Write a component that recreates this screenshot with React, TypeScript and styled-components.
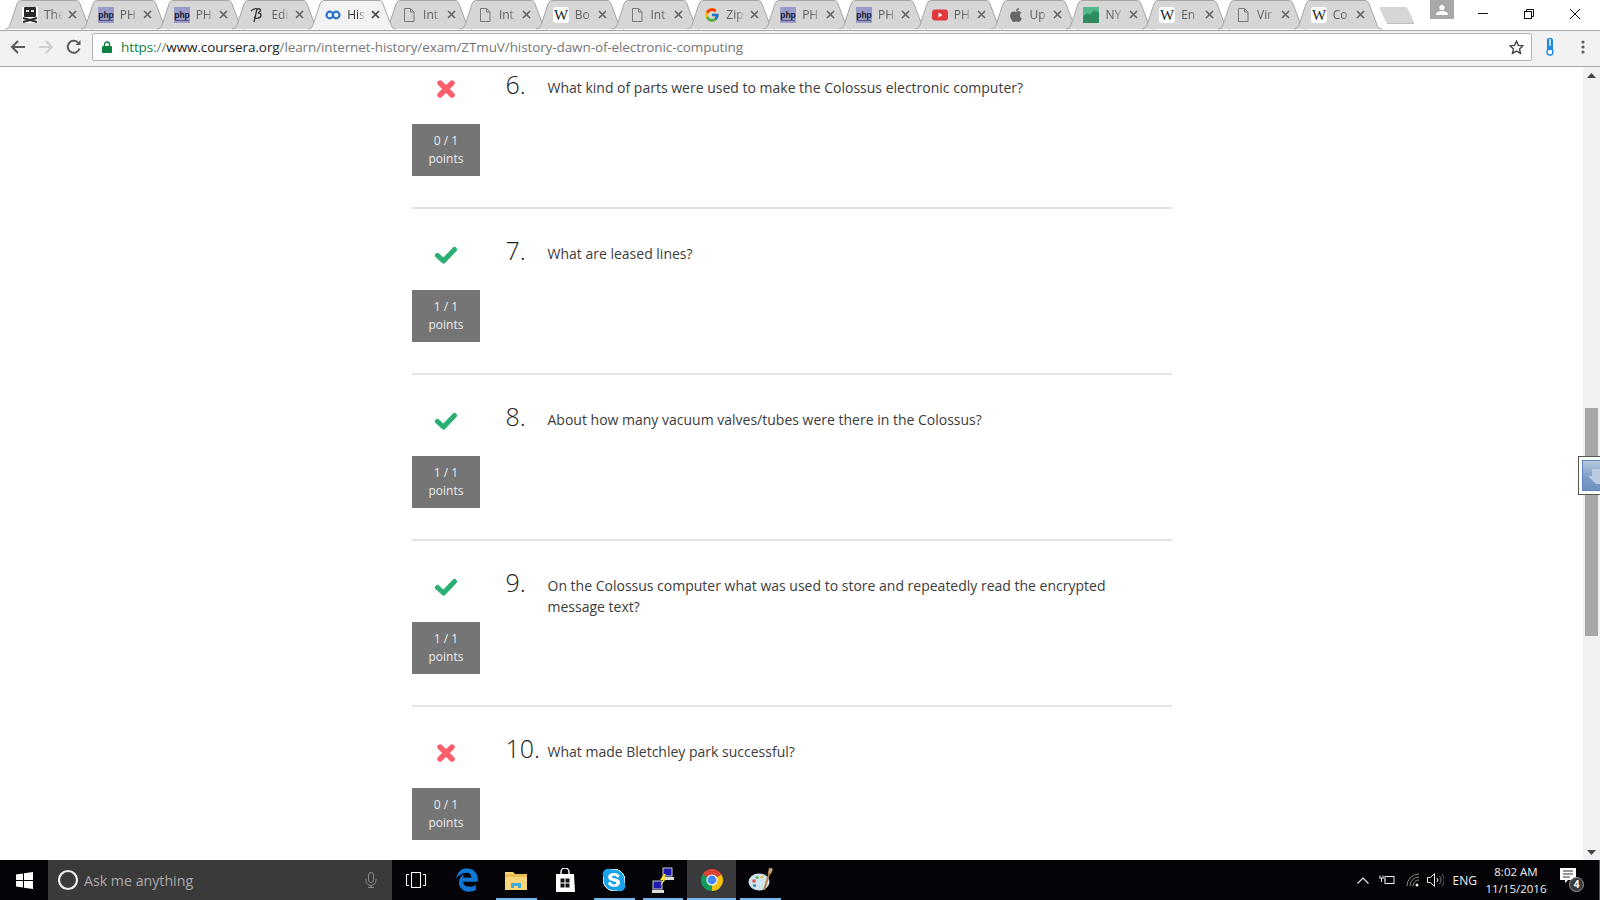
import { ReactNode } from 'react';
import styled, { createGlobalStyle } from 'styled-components';
import { FaApple, FaEdgeLegacy, FaSkype } from 'react-icons/fa';
import { FcGoogle } from 'react-icons/fc';

// #region StyledComponents

const GlobalStyle = createGlobalStyle`
  html, body {
    margin: 0;
    padding: 0;
    overflow: hidden;
    background: #fff;
    font-family: "Open Sans", "Noto Sans", sans-serif;
  }
`;

const Screen = styled.div`
  display: flex;
  flex-direction: column;
  width: 1600px;
  height: 900px;
  overflow: hidden;
`;

const TabStrip = styled.div`
  display: flex;
  flex: 0 0 29px;
  padding-left: 5px;
  background: #fff;
  border-bottom: 1px solid #a6a6a6;
`;

const Tab = styled.div<{ $active?: boolean }>`
  position: relative;
  z-index: ${(p) => (p.$active ? 2 : 1)};
  display: flex;
  align-items: center;
  flex: 0 0 88px;
  height: ${(p) => (p.$active ? 30 : 29)}px;
  margin-right: -12.2px;
  padding-left: 17px;
  padding-bottom: ${(p) => (p.$active ? 1 : 0)}px;
  box-sizing: border-box;
`;

const TabShape = styled.svg`
  position: absolute;
  top: 0;
  left: 0;
`;

const Favicon = styled.span`
  position: relative;
  display: flex;
  align-items: center;
  justify-content: center;
  width: 16px;
  height: 16px;
  flex: none;
`;

const TabTitle = styled.span<{ $active?: boolean }>`
  position: relative;
  width: 19px;
  margin-left: 6px;
  overflow: hidden;
  white-space: nowrap;
  font-size: 12px;
  line-height: 16px;
  color: ${(p) => (p.$active ? '#333' : '#5f5f5f')};
  -webkit-mask-image: linear-gradient(90deg, #000 55%, transparent 100%);
  mask-image: linear-gradient(90deg, #000 55%, transparent 100%);
`;

const TabClose = styled.svg`
  position: relative;
  margin-left: 4.5px;
  flex: none;
`;

const NewTab = styled.div`
  flex: 0 0 28px;
  height: 16px;
  margin: 7px 0 0 13px;
  background: #d6d6d6;
  border-bottom: 1px solid #bdbdbd;
  border-radius: 2px;
  transform: skewX(25deg);
`;

const WindowArea = styled.div`
  display: flex;
  align-items: flex-start;
  margin-left: auto;
  padding-right: 2px;
`;

const ProfileButton = styled.div`
  display: flex;
  align-items: center;
  justify-content: center;
  width: 24px;
  height: 19px;
  margin-right: 6px;
  background: #a8a8a8;
`;

const WindowButton = styled.div`
  display: flex;
  align-items: center;
  justify-content: center;
  width: 46px;
  height: 27px;
`;

const Toolbar = styled.div`
  display: flex;
  align-items: center;
  flex: 0 0 36px;
  box-sizing: border-box;
  padding-bottom: 3px;
  background: #f2f2f2;
  border-bottom: 1px solid #a6a6a6;
`;

const NavButton = styled.div`
  display: flex;
  align-items: center;
  justify-content: center;
  flex: 0 0 28px;
  height: 28px;
  &:first-child {
    margin-left: 4px;
  }
`;

const AddressBar = styled.div`
  display: flex;
  align-items: center;
  width: 1440px;
  height: 28px;
  margin-left: 4px;
  box-sizing: border-box;
  padding: 0 7px 0 9px;
  background: #fff;
  border: 1px solid #b4b4b4;
  border-radius: 2px;
`;

const Url = styled.span`
  margin-left: 9px;
  font-size: 13.5px;
  letter-spacing: -0.1px;
  color: #777;
  white-space: nowrap;
`;

const UrlScheme = styled.span`
  color: #0b8043;
`;

const UrlHost = styled.span`
  color: #222;
`;

const Star = styled.svg`
  margin-left: auto;
`;

const ExtensionButton = styled.div`
  display: flex;
  align-items: center;
  justify-content: center;
  flex: 0 0 31px;
  height: 28px;
  margin-left: 2px;
`;

const Main = styled.div`
  position: relative;
  display: flex;
  flex: 1;
  min-height: 0;
`;

const Page = styled.div`
  flex: 1;
  overflow: hidden;
  background: #fff;
`;

const QuestionList = styled.div`
  width: 760px;
  margin: -24px 0 0 412px;
`;

const Row = styled.div`
  display: flex;
  height: 132px;
  padding-top: 32px;
  border-bottom: 2px solid #e2e2e2;
`;

const ScoreColumn = styled.div`
  display: flex;
  flex-direction: column;
  align-items: center;
  flex: 0 0 68px;
`;

const MarkIcon = styled.div`
  display: flex;
  align-items: center;
  justify-content: center;
  height: 28px;
  margin-bottom: 21px;
`;

const ScoreBox = styled.div`
  width: 68px;
  height: 52px;
  padding-top: 8px;
  box-sizing: border-box;
  background: #757575;
  color: #ebebeb;
  font-size: 12px;
  line-height: 18px;
  text-align: center;
`;

const QuestionNumber = styled.div`
  flex: 0 0 42px;
  margin-left: 25.5px;
  font-size: 25px;
  font-weight: 300;
  line-height: 18px;
  color: #222;
`;

const QuestionText = styled.div`
  width: 590px;
  padding-top: 2px;
  font-size: 14px;
  line-height: 21px;
  color: #3c3c3c;
`;

const ScrollTrack = styled.div`
  display: flex;
  flex-direction: column;
  align-items: center;
  flex: 0 0 17px;
  background: #f1f1f1;
`;

const ScrollArrow = styled.svg`
  flex: none;
  margin-top: 6px;
`;

const ScrollThumb = styled.div`
  width: 13px;
  height: 228px;
  margin-top: 330px;
  background: #a8a8a8;
`;

const ScrollArrowEnd = styled(ScrollArrow)`
  margin-top: auto;
  margin-bottom: 5px;
`;

const FloatingWidget = styled.div`
  position: absolute;
  top: 389px;
  right: 0;
  width: 22px;
  height: 39px;
  box-sizing: border-box;
  padding: 3px 0 3px 3px;
  background: #fff;
  border: 1px solid #555;
  border-right: none;
`;

const WidgetIcon = styled.div`
  display: flex;
  align-items: flex-end;
  justify-content: flex-end;
  height: 100%;
  padding-bottom: 6px;
  box-sizing: border-box;
  background: linear-gradient(180deg, #b9c9de 0%, #7a9cc6 55%, #6f92bd 100%);
  border: 1px solid #5f86c0;
  border-right: none;
`;

const Taskbar = styled.div`
  display: flex;
  align-items: center;
  flex: 0 0 40px;
  background: #040408;
`;

const StartButton = styled.div`
  display: flex;
  align-items: center;
  justify-content: center;
  flex: 0 0 48px;
  height: 40px;
`;

const SearchBox = styled.div`
  display: flex;
  align-items: center;
  flex: 0 0 344px;
  height: 40px;
  box-sizing: border-box;
  padding: 0 15px 0 9px;
  background: #3a3a3a;
`;

const SearchHint = styled.span`
  margin-left: 5px;
  font-size: 14.2px;
  color: #a9a9a9;
`;

const MicIcon = styled.svg`
  margin-left: auto;
`;

const TaskViewButton = styled.div`
  display: flex;
  align-items: center;
  justify-content: center;
  flex: 0 0 48px;
  margin-right: 3px;
  height: 40px;
`;

const TaskButton = styled.div<{ $open?: boolean; $active?: boolean }>`
  position: relative;
  display: flex;
  align-items: center;
  justify-content: center;
  flex: 0 0 48.9px;
  height: 40px;
  background: ${(p) => (p.$active ? '#3a3a3c' : 'transparent')};
  &::after {
    content: '';
    display: ${(p) => (p.$open ? 'block' : 'none')};
    position: absolute;
    left: ${(p) => (p.$active ? 0 : 4)}px;
    right: ${(p) => (p.$active ? 0 : 4)}px;
    bottom: 0;
    height: 2px;
    background: #76b9ed;
  }
`;

const SkypeBadge = styled.span`
  display: flex;
  align-items: center;
  justify-content: center;
  width: 26px;
  height: 26px;
  border-radius: 50%;
  background: radial-gradient(circle, #fff 60%, transparent 62%);
  color: #19a3e8;
`;

const Tray = styled.div`
  display: flex;
  align-items: center;
  height: 40px;
  margin-left: auto;
  padding-right: 4px;
  border-right: 1px solid #555;
  box-sizing: border-box;
`;

const TrayItem = styled.div<{ $gap: number }>`
  display: flex;
  align-items: center;
  margin-left: ${(p) => p.$gap}px;
`;

const TrayLabel = styled.span`
  font-size: 12px;
  color: #f0f0f0;
`;

const Clock = styled.div`
  font-size: 11.5px;
  line-height: 17px;
  color: #f0f0f0;
  text-align: center;
  white-space: nowrap;
`;

const NotificationButton = styled.div`
  position: relative;
  display: flex;
  width: 24px;
  height: 24px;
  margin-right: 11px;
`;

const NotificationCount = styled.span`
  position: absolute;
  right: 0;
  bottom: 0;
  width: 15px;
  height: 15px;
  border-radius: 50%;
  background: #3a3a3a;
  border: 1px solid #999;
  box-sizing: border-box;
  font-size: 10px;
  font-weight: 700;
  line-height: 13px;
  text-align: center;
  color: #fff;
`;

// #endregion

const PhpIcon = () => (
  <svg width="16" height="16" viewBox="0 0 16 16">
    <rect width="16" height="16" fill="#9a9acb" />
    <text x="8" y="11" fontSize="8.5" fontFamily="Liberation Sans, sans-serif" fontWeight="700" textAnchor="middle" fill="#1a1a2a">
      php
    </text>
    <rect x="1" y="13" width="14" height="1" fill="#55557a" />
  </svg>
);

const PageIcon = () => (
  <svg width="16" height="16" viewBox="0 0 16 16" fill="none" stroke="#777" strokeWidth="1">
    <path d="M3.5 1.5h6l3.5 3.5v9.5h-9.5z" />
    <path d="M9.5 1.5v3.5h3.5" />
  </svg>
);

const WikiIcon = () => (
  <svg width="16" height="16" viewBox="0 0 16 16">
    <rect width="16" height="16" rx="3" fill="#fff" />
    <text x="8" y="13" fontSize="15" fontFamily="Liberation Serif, serif" textAnchor="middle" fill="#222">
      W
    </text>
  </svg>
);

const PirateIcon = () => (
  <svg width="16" height="16" viewBox="0 0 16 16">
    <rect width="16" height="16" fill="#fff" />
    <rect x="2" y="0" width="12" height="10" rx="1" fill="#2a2a2a" />
    <rect x="4" y="3" width="3" height="2" fill="#ddd" />
    <rect x="9" y="3" width="3" height="2" fill="#ddd" />
    <path d="M1 11l14 4M15 11L1 15" stroke="#2a2a2a" strokeWidth="2" />
  </svg>
);

const ScriptIcon = () => (
  <svg width="16" height="16" viewBox="0 0 16 16" fill="none" stroke="#333" strokeWidth="1.3">
    <path d="M2 4c2-2 4-3 6-2l-3 13M8 2c4-1 5 2 1 4 4 0 4 4 0 5-2 1-3 0-4-1" />
  </svg>
);

const CourseraIcon = () => (
  <svg width="16" height="16" viewBox="0 0 16 16" fill="none" stroke="#2a73cc" strokeWidth="2.2">
    <circle cx="4.8" cy="8" r="3.3" />
    <circle cx="11.2" cy="8" r="3.3" />
  </svg>
);

const YoutubeIcon = () => (
  <svg width="16" height="16" viewBox="0 0 16 16">
    <rect y="2.5" width="16" height="11" rx="3" fill="#e0393e" />
    <path d="M6.5 5.5l4 2.5-4 2.5z" fill="#fff" />
  </svg>
);

const ChartIcon = () => (
  <svg width="16" height="16" viewBox="0 0 16 16">
    <rect width="16" height="16" fill="#3c9a70" />
    <path d="M0 10l4-3 3 2 4-5 5 3v9H0z" fill="#2f8a5f" />
    <path d="M0 0h16v5l-5-2-4 4-3-1-4 3z" fill="#52b98b" />
  </svg>
);

const CheckMark = () => (
  <svg width="24" height="18" viewBox="0 0 24 18" fill="none" stroke="#2bb074" strokeWidth="5" strokeLinecap="round" strokeLinejoin="round">
    <path d="M3.5 9.5l6 5.5L20.5 3.5" />
  </svg>
);

const CrossMark = () => (
  <svg width="18" height="18" viewBox="0 0 18 18" fill="none" stroke="#fb5f6c" strokeWidth="5.4" strokeLinecap="round">
    <path d="M3 3l12 12M15 3L3 15" />
  </svg>
);

const tabs: { icon: ReactNode; title: string; active?: boolean }[] = [
  { icon: <PirateIcon />, title: 'The' },
  { icon: <PhpIcon />, title: 'PH' },
  { icon: <PhpIcon />, title: 'PH' },
  { icon: <ScriptIcon />, title: 'Edi' },
  { icon: <CourseraIcon />, title: 'His', active: true },
  { icon: <PageIcon />, title: 'Int' },
  { icon: <PageIcon />, title: 'Int' },
  { icon: <WikiIcon />, title: 'Bo' },
  { icon: <PageIcon />, title: 'Int' },
  { icon: <FcGoogle size={16} />, title: 'Zip' },
  { icon: <PhpIcon />, title: 'PH' },
  { icon: <PhpIcon />, title: 'PH' },
  { icon: <YoutubeIcon />, title: 'PH' },
  { icon: <FaApple size={16} color="#666" />, title: 'Up' },
  { icon: <ChartIcon />, title: 'NY' },
  { icon: <WikiIcon />, title: 'En' },
  { icon: <PageIcon />, title: 'Vir' },
  { icon: <WikiIcon />, title: 'Co' },
];

const questions = [
  { n: 6, score: 0, text: 'What kind of parts were used to make the Colossus electronic computer?' },
  { n: 7, score: 1, text: 'What are leased lines?' },
  { n: 8, score: 1, text: 'About how many vacuum valves/tubes were there in the Colossus?' },
  { n: 9, score: 1, text: 'On the Colossus computer what was used to store and repeatedly read the encrypted message text?' },
  { n: 10, score: 0, text: 'What made Bletchley park successful?' },
];

const TAB_PATH = 'M0 29C3 29 4 27 5 25L12 4C13 1 14.5 .5 17 .5H70C73 .5 74 1 75 4L83 25C84 27 85 29 88 29';

function BrowserTab({ icon, title, active }: { icon: ReactNode; title: string; active?: boolean }) {
  return (
    <Tab $active={active}>
      <TabShape width="88" height="30" viewBox="0 0 88 30">
        <path d={TAB_PATH} fill={active ? '#f2f2f2' : '#d6d6d6'} stroke="#a6a6a6" strokeWidth="1" />
      </TabShape>
      <Favicon>{icon}</Favicon>
      <TabTitle $active={active}>{title}</TabTitle>
      <TabClose width="9" height="9" viewBox="0 0 9 9" stroke={active ? '#444' : '#666'} strokeWidth="1.7">
        <path d="M1 1l7 7M8 1L1 8" />
      </TabClose>
    </Tab>
  );
}

const ChromeLogo = () => (
  <svg width="24" height="24" viewBox="0 0 24 24">
    <path d="M12 12L2.47 6.5A11 11 0 0 1 21.53 6.5Z" fill="#db4437" />
    <path d="M12 12L21.53 6.5A11 11 0 0 1 12 23Z" fill="#f4c20d" />
    <path d="M12 12L12 23A11 11 0 0 1 2.47 6.5Z" fill="#0f9d58" />
    <circle cx="12" cy="12" r="5.6" fill="#fff" />
    <circle cx="12" cy="12" r="4.4" fill="#4285f4" />
  </svg>
);

const ExplorerIcon = () => (
  <svg width="22" height="20" viewBox="0 0 22 20">
    <path d="M0 2h8l2 2h12v16H0z" fill="#f6d67a" />
    <rect y="4" width="22" height="3" fill="#e9bd54" />
    <path d="M6 18v-5h10v5h-3v-2H9v2z" fill="#3fa8dc" />
  </svg>
);

const StoreIcon = () => (
  <svg width="22" height="24" viewBox="0 0 22 24">
    <path d="M7 6V4a4 4 0 0 1 8 0v2" fill="none" stroke="#fff" strokeWidth="1.4" />
    <path d="M2 6h18l1 18H2z" fill="#fff" />
    <path d="M6.5 10.5h4v4h-4zM11.5 10.5h4v4h-4zM6.5 15.5h4v4h-4zM11.5 15.5h4v4h-4z" fill="#111" />
  </svg>
);

const NetworkIcon = () => (
  <svg width="24" height="26" viewBox="0 0 24 26">
    <rect x="12" y="1" width="9" height="8" fill="#1a1ab0" stroke="#ccc" />
    <rect x="11" y="10" width="12" height="3" fill="#ddd" />
    <rect x="2" y="14" width="9" height="8" fill="#1a1ab0" stroke="#ccc" />
    <rect x="1" y="23" width="12" height="3" fill="#ddd" />
    <path d="M13 7l-4 6h3l-3 6 7-8h-3l2-4z" fill="#ffe733" />
  </svg>
);

const PaintIcon = () => (
  <svg width="26" height="26" viewBox="0 0 26 26">
    <ellipse cx="11" cy="15" rx="10.5" ry="8.5" fill="#cfe3ee" />
    <circle cx="6" cy="14" r="1.8" fill="#d9534f" />
    <circle cx="9" cy="10.5" r="1.6" fill="#5cb85c" />
    <circle cx="14" cy="10" r="1.6" fill="#e8c33a" />
    <circle cx="6.5" cy="18.5" r="1.6" fill="#4a7fc1" />
    <path d="M23 1l-7 22" stroke="#b5814a" strokeWidth="2" />
    <path d="M21 1l4 1-2 5-3-1z" fill="#c9a26a" />
  </svg>
);

export default function App() {
  return (
    <Screen>
      <GlobalStyle />
      <TabStrip>
        {tabs.map((t, i) => (
          <BrowserTab key={i} icon={t.icon} title={t.title} active={t.active} />
        ))}
        <NewTab />
        <WindowArea>
          <ProfileButton>
            <svg width="12" height="12" viewBox="0 0 12 12" fill="#fff">
              <circle cx="6" cy="3.5" r="2.6" />
              <path d="M0 11c0-3 3-4 6-4s6 1 6 4z" />
            </svg>
          </ProfileButton>
          <WindowButton>
            <svg width="10" height="1" viewBox="0 0 10 1">
              <rect width="10" height="1" fill="#111" />
            </svg>
          </WindowButton>
          <WindowButton>
            <svg width="10" height="10" viewBox="0 0 10 10" fill="none" stroke="#111">
              <rect x=".5" y="2.5" width="7" height="7" />
              <path d="M2.5 2.5v-2h7v7h-2" />
            </svg>
          </WindowButton>
          <WindowButton>
            <svg width="10" height="10" viewBox="0 0 10 10" stroke="#111">
              <path d="M0 0l10 10M10 0L0 10" />
            </svg>
          </WindowButton>
        </WindowArea>
      </TabStrip>

      <Toolbar>
        <NavButton>
          <svg width="16" height="16" viewBox="0 0 16 16" fill="none" stroke="#5a5a5a" strokeWidth="2">
            <path d="M15 8H2M8 2L2 8l6 6" />
          </svg>
        </NavButton>
        <NavButton>
          <svg width="16" height="16" viewBox="0 0 16 16" fill="none" stroke="#cfcfcf" strokeWidth="2">
            <path d="M1 8h13M8 2l6 6-6 6" />
          </svg>
        </NavButton>
        <NavButton>
          <svg width="16" height="16" viewBox="0 0 16 16" fill="none" stroke="#5a5a5a" strokeWidth="2">
            <path d="M13.5 9.5A6 6 0 1 1 12 3.6" />
            <path d="M14.5 1v5h-5z" fill="#5a5a5a" stroke="none" />
          </svg>
        </NavButton>
        <AddressBar>
          <svg width="10" height="12" viewBox="0 0 10 12">
            <path d="M2.5 5V3.5a2.5 2.5 0 0 1 5 0V5" fill="none" stroke="#0b8043" strokeWidth="1.4" />
            <rect y="5" width="10" height="7" rx="1" fill="#0b8043" />
          </svg>
          <Url>
            <UrlScheme>https</UrlScheme>://<UrlHost>www.coursera.org</UrlHost>/learn/internet-history/exam/ZTmuV/history-dawn-of-electronic-computing
          </Url>
          <Star width="15" height="15" viewBox="0 0 15 15" fill="none" stroke="#444" strokeWidth="1.4">
            <path d="M7.5 1.2l1.9 4.2 4.5.5-3.4 3 1 4.5-4-2.3-4 2.3 1-4.5-3.4-3 4.5-.5z" />
          </Star>
        </AddressBar>
        <ExtensionButton>
          <svg width="8" height="18" viewBox="0 0 8 18">
            <rect x="1" width="6" height="13" rx="2" fill="#1e88e5" />
            <rect x="3" y="1" width="2" height="7" fill="#bcdcf7" />
            <circle cx="4" cy="14" r="3" fill="#fff" stroke="#1e88e5" strokeWidth="1.4" />
          </svg>
        </ExtensionButton>
        <ExtensionButton>
          <svg width="4" height="14" viewBox="0 0 4 14" fill="#5a5a5a">
            <circle cx="2" cy="2" r="1.6" />
            <circle cx="2" cy="7" r="1.6" />
            <circle cx="2" cy="12" r="1.6" />
          </svg>
        </ExtensionButton>
      </Toolbar>

      <Main>
        <Page>
          <QuestionList>
            {questions.map((q) => (
              <Row key={q.n}>
                <ScoreColumn>
                  <MarkIcon>{q.score > 0 ? <CheckMark /> : <CrossMark />}</MarkIcon>
                  <ScoreBox>
                    {q.score} / 1
                    <br />
                    points
                  </ScoreBox>
                </ScoreColumn>
                <QuestionNumber>{q.n}.</QuestionNumber>
                <QuestionText>{q.text}</QuestionText>
              </Row>
            ))}
          </QuestionList>
        </Page>
        <ScrollTrack>
          <ScrollArrow width="9" height="5" viewBox="0 0 9 5">
            <path d="M4.5 0L9 5H0z" fill="#444" />
          </ScrollArrow>
          <ScrollThumb />
          <ScrollArrowEnd width="9" height="5" viewBox="0 0 9 5">
            <path d="M0 0h9L4.5 5z" fill="#444" />
          </ScrollArrowEnd>
        </ScrollTrack>
        <FloatingWidget>
          <WidgetIcon>
            <svg width="12" height="15" viewBox="0 0 12 15">
              <path d="M4 0h8v15H8L0 7h4z" fill="#b9cbe0" />
            </svg>
          </WidgetIcon>
        </FloatingWidget>
      </Main>

      <Taskbar>
        <StartButton>
          <svg width="17" height="17" viewBox="0 0 17 17" fill="#fff">
            <path d="M0 2.4L7 1.4V8H0zM8 1.2L17 0v8H8zM0 9h7v6.6L0 14.6zM8 9h9v8l-9-1.2z" />
          </svg>
        </StartButton>
        <SearchBox>
          <svg width="22" height="22" viewBox="0 0 22 22" fill="none" stroke="#eee" strokeWidth="2.2">
            <circle cx="11" cy="11" r="9" />
          </svg>
          <SearchHint>Ask me anything</SearchHint>
          <MicIcon width="12" height="16" viewBox="0 0 12 16" fill="none" stroke="#888" strokeWidth="1">
            <rect x="3.5" y=".5" width="5" height="10" rx="2.5" />
            <path d="M1 7v1.5a5 5 0 0 0 10 0V7M6 13.5V16M3 15.5h6" />
          </MicIcon>
        </SearchBox>
        <TaskViewButton>
          <svg width="20" height="16" viewBox="0 0 20 16" fill="none" stroke="#fff">
            <rect x="5.5" y=".5" width="9" height="15" />
            <path d="M3 2.5H.5v11H3M17 2.5h2.5v11H17" />
          </svg>
        </TaskViewButton>
        <TaskButton>
          <FaEdgeLegacy size={24} color="#0f78d4" />
        </TaskButton>
        <TaskButton $open>
          <ExplorerIcon />
        </TaskButton>
        <TaskButton>
          <StoreIcon />
        </TaskButton>
        <TaskButton $open>
          <SkypeBadge>
            <FaSkype size={26} />
          </SkypeBadge>
        </TaskButton>
        <TaskButton $open>
          <NetworkIcon />
        </TaskButton>
        <TaskButton $open $active>
          <ChromeLogo />
        </TaskButton>
        <TaskButton $open>
          <PaintIcon />
        </TaskButton>
        <Tray>
          <TrayItem $gap={0}>
            <svg width="12" height="7" viewBox="0 0 12 7" fill="none" stroke="#eee" strokeWidth="1.1">
              <path d="M.5 6.5L6 1l5.5 5.5" />
            </svg>
          </TrayItem>
          <TrayItem $gap={10}>
            <svg width="16" height="10" viewBox="0 0 16 10" fill="none" stroke="#eee">
              <path d="M4 .5v2M1 .5v2M0 3h5M2.5 3v4M5 5h1" />
              <rect x="6" y="1.5" width="9" height="7" />
            </svg>
          </TrayItem>
          <TrayItem $gap={11}>
            <svg width="14" height="14" viewBox="0 0 14 14" fill="none" stroke="#888" strokeWidth="1">
              <path d="M1 13A12 12 0 0 1 13 1M4 13a9 9 0 0 1 9-9M7 13a6 6 0 0 1 6-6" />
              <circle cx="11" cy="12" r="1.5" fill="#eee" stroke="none" />
            </svg>
          </TrayItem>
          <TrayItem $gap={7}>
            <svg width="17" height="14" viewBox="0 0 17 14" fill="none" stroke="#eee">
              <path d="M.5 4.5h3l4-4v13l-4-4h-3z" />
              <path d="M10 5a3 3 0 0 1 0 4" />
              <path d="M12.5 3a6 6 0 0 1 0 8M15 1a9 9 0 0 1 0 12" stroke="#777" />
            </svg>
          </TrayItem>
          <TrayItem $gap={9}>
            <TrayLabel>ENG</TrayLabel>
          </TrayItem>
          <TrayItem $gap={8.5}>
            <Clock>
              8:02 AM
              <br />
              11/15/2016
            </Clock>
          </TrayItem>
          <TrayItem $gap={13.5}>
            <NotificationButton>
              <svg width="18" height="16" viewBox="0 0 18 16">
                <path d="M0 0h16v12H8l-3 3v-3H0z" fill="#fff" />
                <path d="M3 3h10M3 6h10M3 9h7" stroke="#333" />
              </svg>
              <NotificationCount>4</NotificationCount>
            </NotificationButton>
          </TrayItem>
        </Tray>
      </Taskbar>
    </Screen>
  );
}
